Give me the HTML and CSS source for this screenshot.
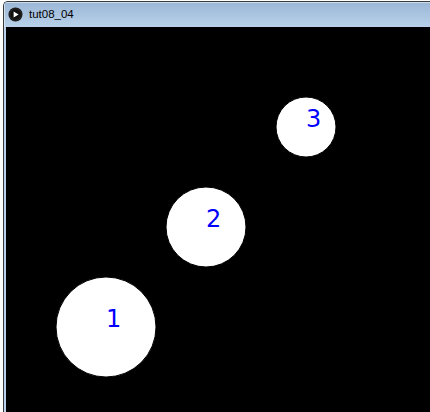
FILE: index.html
```html
<!DOCTYPE html>
<html>
<head>
<meta charset="utf-8">
<link rel="stylesheet" href="styles.css">
</head>
<body>
<div class="window">
  <div class="titlebar">
    <svg class="app-icon" width="15" height="15" viewBox="0 0 15 15">
      <circle cx="7.5" cy="7.5" r="7" fill="#111"/>
      <circle cx="7.5" cy="7.5" r="5.8" fill="none" stroke="#333" stroke-width="0.8"/>
      <path d="M5.6 4.4 L10.6 7.5 L5.6 10.6 Z" fill="#fff"/>
    </svg>
    <span class="title">tut08_04</span>
  </div>
  <div class="body">
    <svg class="sketch" width="424" height="385" viewBox="0 0 424 385">
      <rect width="424" height="385" fill="#000"/>
      <circle cx="100" cy="300" r="50" fill="#fff" stroke="#000" stroke-width="1"/>
      <circle cx="200" cy="200" r="40" fill="#fff" stroke="#000" stroke-width="1"/>
      <circle cx="300" cy="100" r="30" fill="#fff" stroke="#000" stroke-width="1"/>
      <text class="label" x="100" y="300">1</text>
      <text class="label" x="200" y="200">2</text>
      <text class="label" x="300" y="100">3</text>
    </svg>
  </div>
</div>
</body>
</html>
```
FILE: styles.css
```css
html, body {
  margin: 0;
  padding: 0;
  background: #fff;
  width: 430px;
  height: 412px;
  overflow: hidden;
}
.window {
  margin: 1px 0 0 3px;
  border-top: 1px solid #3a3a3a;
  border-left: 1px solid #3a3a3a;
  border-top-left-radius: 5px;
  background: #b9d1ea;
  height: 410px;
  display: flex;
  flex-direction: column;
  overflow: hidden;
}
.titlebar {
  height: 25px;
  flex: none;
  display: flex;
  align-items: center;
  padding-left: 4px;
  gap: 6px;
  background: linear-gradient(#9ab7d6, #b9d1ea);
  box-shadow: inset 1px 1px 0 rgba(255,255,255,0.5);
}
.app-icon {
  display: block;
  margin-top: -1px;
}
.title {
  font-family: "Liberation Sans", Arial, sans-serif;
  font-size: 11.5px;
  color: #000;
  margin-top: -1px;
}
.body {
  flex: 1;
  padding-left: 2px;
  background: #b9d1ea;
}
.sketch {
  display: block;
}
.label {
  font-family: "DejaVu Sans", sans-serif;
  font-size: 24px;
  fill: #0000ff;
}
```
